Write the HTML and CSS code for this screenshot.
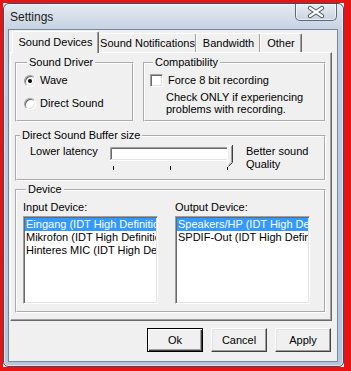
FILE: index.html
```html
<!DOCTYPE html>
<html>
    <head>
        <meta charset="utf-8">
        <title>Settings</title>
        <link rel="stylesheet" href="styles.css">
    </head>
    <body>
        <div class="shot">
            <div class="win">
                <div class="titlebar">
                    <span class="title">Settings</span>
                    <div class="close">
                        <svg width="42" height="17" viewBox="0 0 42 17">
                            <path d="M15 5L27 13M27 5L15 13" stroke="#4b5668" stroke-width="4.4" stroke-linecap="round" fill="none"/>
                            <path d="M15 5L27 13M27 5L15 13" stroke="#fff" stroke-width="2.4" stroke-linecap="round" fill="none"/>
                        </svg>
                    </div>
                </div>
                <div class="client">
                    <div class="tabs">
                        <div class="tab sel t1">Sound Devices</div>
                        <div class="tab t2">Sound Notifications</div>
                        <div class="tab t3">Bandwidth</div>
                        <div class="tab t4">Other</div>
                    </div>
                    <div class="panel">
                        <div class="toprow">
                            <fieldset class="grp driver">
                                <legend>Sound Driver</legend>
                                <div class="opt"><span class="radio on"></span>Wave</div>
                                <div class="opt second"><span class="radio"></span>Direct Sound</div>
                            </fieldset>
                            <fieldset class="grp compat">
                                <legend>Compatibility</legend>
                                <div class="opt"><span class="check"></span>Force 8 bit recording</div>
                                <div class="note">Check ONLY if experiencing<br>problems with recording.</div>
                            </fieldset>
                        </div>
                        <fieldset class="grp buffer">
                            <legend>Direct Sound Buffer size</legend>
                            <div class="bufrow">
                                <span class="lowlab">Lower latency</span>
                                <svg class="slider" width="126" height="27" viewBox="0 0 126 27">
                                    <rect x="1" y="2" width="122" height="14" fill="#fff"/>
                                    <path d="M1.5 16V2.5H123" stroke="#a0a0a0" fill="none"/>
                                    <path d="M2.5 15V3.5H122" stroke="#696969" fill="none"/>
                                    <path d="M1 15.5H122.5V2" stroke="#fff" fill="none"/>
                                    <path d="M2 14.5H121.5V3" stroke="#e3e3e3" fill="none"/>
                                    <path d="M118 0H123V17L119 21H118Z" fill="#f0f0f0"/>
                                    <path d="M118.5 21V0.5H122.5" stroke="#fff" fill="none"/>
                                    <path d="M123.5 0V17.5L119.5 21.5" stroke="#404040" fill="none"/>
                                    <path d="M122.5 1V17L119 20.5" stroke="#a0a0a0" fill="none"/>
                                    <path d="M4.5 21v4M61.5 21v4M118.5 22v3" stroke="#000" fill="none"/>
                                </svg>
                                <span class="highlab">Better sound<br>Quality</span>
                            </div>
                        </fieldset>
                        <fieldset class="grp device">
                            <legend>Device</legend>
                            <div class="devcols">
                                <div class="devcol">
                                    <div class="devlab">Input Device:</div>
                                    <div class="list">
                                        <div class="item sel">Eingang (IDT High Definitio</div>
                                        <div class="item">Mikrofon (IDT High Definitio</div>
                                        <div class="item">Hinteres MIC (IDT High Def</div>
                                    </div>
                                </div>
                                <div class="devcol">
                                    <div class="devlab">Output Device:</div>
                                    <div class="list">
                                        <div class="item sel">Speakers/HP (IDT High De</div>
                                        <div class="item">SPDIF-Out (IDT High Defini</div>
                                    </div>
                                </div>
                            </div>
                        </fieldset>
                    </div>
                    <div class="buttons">
                        <div class="btn def">Ok</div>
                        <div class="btn">Cancel</div>
                        <div class="btn">Apply</div>
                    </div>
                </div>
            </div>
        </div>
    </body>
</html>
```

FILE: styles.css
```css
body {
    margin: 0;
    overflow: hidden;
    font-family: "Liberation Sans", Arial, sans-serif;
    font-size: 11px;
    color: black;
    background-color: white;
}

div.shot {
    box-sizing: border-box;
    width: 351px;
    height: 371px;
    border-style: solid;
    border-color: #e81414;
    border-width: 3px 7px 4px 3px;
}

div.win {
    box-sizing: border-box;
    height: 364px;
    border: solid 1px #3d4b60;
    border-radius: 6px 6px 5px 5px;
    padding: 0 5px 4px 4px;
    background: linear-gradient(180deg, #e4eaf1 0, #d4dde8 14px, #c2cfdf 30px, #b6c6da 100%);
    box-shadow: inset 0 0 0 1px rgba(255, 255, 255, 0.5);
}

div.titlebar {
    display: flex;
    align-items: flex-start;
    height: 25px;
}

span.title {
    flex: 1;
    padding: 6px 0 0 2px;
    font-size: 12px;
    line-height: 14px;
    color: #1c1c1c;
}

div.close {
    width: 42px;
    height: 17px;
    margin-right: 1px;
    box-sizing: border-box;
    border: solid 1px #5c6779;
    border-top: none;
    border-radius: 0 0 5px 5px;
    background: linear-gradient(180deg, #e9eef4, #c9d2de);
    box-shadow: inset 0 0 0 1px rgba(255, 255, 255, 0.6);
}

div.close svg {
    display: block;
    margin: -1px 0 0 -1px;
}

div.client {
    box-sizing: border-box;
    height: 333px;
    border: solid 1px #76879e;
    background-color: #f0f0f0;
}

/* tabs */

div.tabs {
    display: flex;
    align-items: flex-end;
    height: 21px;
    margin: 1px 0 0 3px;
}

div.tab {
    box-sizing: border-box;
    height: 19px;
    line-height: 18px;
    text-align: center;
    white-space: nowrap;
    background-color: #f0f0f0;
    border-top: solid 1px white;
    border-left: solid 1px white;
    border-right: solid 1px #696969;
    border-radius: 2px 2px 0 0;
    box-shadow: inset -1px 0 #a0a0a0;
}

div.tab.sel {
    position: relative;
    z-index: 1;
    height: 22px;
    margin-bottom: -1px;
    line-height: 20px;
}

div.t1 { width: 87px; }
div.t2 { width: 99px; margin-left: -1px; }
div.t3 { width: 65px; margin-left: -1px; }
div.t4 { width: 42px; margin-left: -1px; }

div.panel {
    box-sizing: border-box;
    width: 322px;
    height: 269px;
    margin-left: 1px;
    padding: 3px 0 0 4px;
    border: solid 1px;
    border-color: white #696969 #696969 white;
    box-shadow: inset -1px -1px #a0a0a0;
}

/* group boxes */

fieldset.grp {
    box-sizing: border-box;
    margin: 0;
    padding: 0;
    min-width: 0;
    border: groove 2px white;
}

fieldset.grp legend {
    margin-left: 3px;
    padding: 0 2px;
    line-height: 13px;
}

div.toprow {
    display: flex;
}

fieldset.driver {
    width: 119px;
    height: 66px;
    padding: 5px 0 0 7px;
}

fieldset.compat {
    width: 183px;
    height: 66px;
    margin-left: 9px;
    padding: 5px 0 0 5px;
}

div.opt {
    display: flex;
    align-items: center;
    height: 13px;
    line-height: 13px;
    white-space: nowrap;
}

div.opt.second {
    margin-top: 10px;
}

span.radio {
    box-sizing: border-box;
    position: relative;
    width: 12px;
    height: 12px;
    margin-right: 4px;
    border-radius: 50%;
    border: solid 1px;
    border-color: #a0a0a0 white white #a0a0a0;
    box-shadow: inset 1px 1px #696969, inset -1px -1px #e3e3e3;
    background-color: white;
}

span.radio.on::after {
    content: "";
    position: absolute;
    left: 3px;
    top: 3px;
    width: 4px;
    height: 4px;
    border-radius: 50%;
    background-color: black;
}

span.check {
    box-sizing: border-box;
    width: 13px;
    height: 13px;
    margin-right: 5px;
    border: solid 1px;
    border-color: #a0a0a0 white white #a0a0a0;
    box-shadow: inset 1px 1px #696969, inset -1px -1px #e3e3e3;
    background-color: white;
}

div.note {
    margin: 4px 0 0 16px;
    line-height: 12px;
}

fieldset.buffer {
    width: 311px;
    height: 52px;
    margin-top: 7px;
}

div.bufrow {
    display: flex;
    align-items: flex-start;
    padding: 3px 0 0 13px;
}

span.lowlab {
    width: 79px;
    line-height: 12px;
}

svg.slider {
    display: block;
}

span.highlab {
    margin-left: 11px;
    line-height: 13px;
}

fieldset.device {
    width: 311px;
    height: 130px;
    margin-top: 2px;
    padding: 5px 0 0 6px;
}

div.devcols {
    display: flex;
    gap: 17px;
}

div.devlab {
    line-height: 12px;
}

div.list {
    box-sizing: border-box;
    width: 135px;
    height: 88px;
    margin-top: 3px;
    padding: 1px;
    overflow: hidden;
    border: solid 1px;
    border-color: #a0a0a0 white white #a0a0a0;
    box-shadow: inset 1px 1px #696969, inset -1px -1px #e3e3e3;
    background-color: white;
}

div.item {
    height: 13px;
    line-height: 13px;
    padding-left: 1px;
    white-space: nowrap;
    overflow: hidden;
}

div.item.sel {
    background-color: #3399ff;
    color: white;
}

/* buttons */

div.buttons {
    display: flex;
    justify-content: flex-end;
    gap: 8px;
    margin-top: 7px;
    padding-right: 6px;
}

div.btn {
    box-sizing: border-box;
    width: 56px;
    height: 24px;
    line-height: 22px;
    text-align: center;
    background-color: #f0f0f0;
    border: solid 1px;
    border-color: white #404040 #404040 white;
    box-shadow: inset -1px -1px #a0a0a0, inset 1px 1px #e3e3e3;
}

div.btn.def {
    border-color: black;
    box-shadow: inset 1px 1px white, inset -1px -1px #404040, inset -2px -2px #a0a0a0;
}
```
